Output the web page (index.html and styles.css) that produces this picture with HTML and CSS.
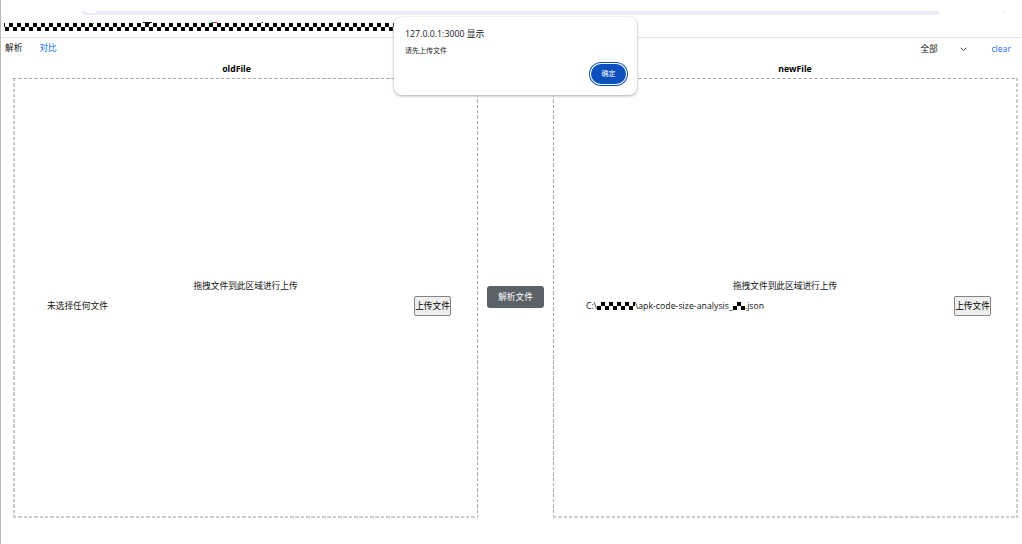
FILE: index.html
```html
<!DOCTYPE html>
<html lang="zh-CN">
<head>
<meta charset="utf-8">
<title>apk-code-size-analysis</title>
<link rel="stylesheet" href="styles.css">
</head>
<body>
<div class="page">
  <header class="browser">
    <div class="address-row"><div class="address"><div class="address-end"></div></div><div class="speck"></div></div>
    <svg class="bookmarks" viewBox="0 0 400 2"><path fill="#111" d="M138 0h9v1h-2v1h-4v-1h-3z"/><path fill="#29a329" d="M206 0h3v1h-3zM256 0h2v1h-2zM87 1h2v1h-2z"/><path fill="#e22" d="M209 0h3v1h-3z"/><path fill="#777" d="M333 0h3v1h-3z"/></svg>
    <div class="mosaic"></div>
  </header>
  <nav class="toolbar">
    <span class="tab">解析</span>
    <a class="tab link">对比</a>
    <div class="filter"><span>全部</span><svg class="chevron" viewBox="0 0 7 5"><path d="M.8 .8l2.7 2.7L6.2 .8"/></svg></div>
    <a class="link clear">clear</a>
  </nav>
  <main class="compare">
    <section class="panel">
      <h2 class="title old">oldFile</h2>
      <div class="drop left">
        <p class="hint">拖拽文件到此区域进行上传</p>
        <div class="row"><span class="file">未选择任何文件</span><button class="upload">上传文件</button></div>
      </div>
    </section>
    <button class="parse">解析文件</button>
    <section class="panel">
      <h2 class="title new">newFile</h2>
      <div class="drop right">
        <p class="hint">拖拽文件到此区域进行上传</p>
        <div class="row"><span class="file"><span>C:\</span><i class="mask wide"></i><span class="name">\apk-code-size-analysis_</span><i class="mask"></i><span>.json</span></span><button class="upload">上传文件</button></div>
      </div>
    </section>
  </main>
</div>
<div class="dialog">
  <div class="origin">127.0.0.1:3000 显示</div>
  <div class="message">请先上传文件</div>
  <button class="ok">确定</button>
</div>
</body>
</html>
```
FILE: styles.css
```css
* { box-sizing: border-box; }
body {
  margin: 0;
  background: #fff;
  color: #202124;
  font: 8.7px/12px "Open Sans", "Noto Sans CJK SC", sans-serif;
}
button { font: inherit; padding: 0; white-space: nowrap; }
.page {
  width: 1022px;
  height: 544px;
  border-left: 1px solid #bbb;
  overflow: hidden;
}
.browser {
  height: 38px;
  padding-top: 11px;
  border-bottom: 1px solid #e4e4e4;
}
.address-row { display: flex; height: 4px; }
.address {
  width: 858px;
  height: 4px;
  margin-left: 81px;
  padding-left: 4px;
  background: #ebedf8;
  border-radius: 0 0 5px 5px;
}
.address-end {
  width: 10px;
  height: 2px;
  background: #fff;
  border-radius: 0 0 5px 5px;
}
.speck {
  width: 4px;
  height: 1px;
  margin-left: 62px;
  background: #ebedf8;
}
.bookmarks {
  display: block;
  width: 400px;
  height: 2px;
  margin: 7px 0 0 4px;
}
.mosaic {
  width: 396px;
  height: 8px;
  margin: -1px 0 0 3px;
  background: repeating-conic-gradient(#fff 0 25%, #000 0 50%) -3px 0 / 8px 8px;
}
.toolbar {
  display: flex;
  height: 24px;
  padding: 4px 11px 0 4px;
  color: #111;
}
.tab { margin-right: 17px; }
.link { color: #0d6efd; }
.filter {
  display: flex;
  align-items: center;
  justify-content: space-between;
  width: 47px;
  height: 14px;
  margin-left: auto;
}
.chevron {
  width: 7px;
  height: 5px;
  fill: none;
  stroke: #333;
}
.clear { margin: 1px 0 0 24px; }
.compare {
  display: flex;
  align-items: flex-start;
  padding-left: 12px;
}
.panel { width: 465px; }
.title {
  height: 16px;
  margin: 0;
  padding-top: 1px;
  color: #000;
  font-size: 8.7px;
  line-height: 12px;
  text-align: center;
}
.old { padding-right: 18px; }
.new { padding-left: 19px; }
.drop {
  height: 440px;
  padding: 202px 27px 0 34px;
  color: #111;
  background-repeat: no-repeat;
  background-image:
    repeating-linear-gradient(90deg, #aaa 0 3.4px, transparent 3.4px 5.33px),
    repeating-linear-gradient(90deg, #ccc 0 3.4px, transparent 3.4px 5.33px),
    repeating-linear-gradient(#ccc 0 3.4px, transparent 3.4px 5.33px),
    repeating-linear-gradient(#aaa 0 3.4px, transparent 3.4px 5.33px);
}
.left {
  background-size: 100% 1px, 100% 2px, 2px 100%, 1px 100%;
  background-position: 0 0, 0 100%, 0 0, 100% 0;
}
.right {
  padding-left: 33px;
  background-size: 100% 1px, 100% 2px, 2px 100%, 1px 100%;
  background-position: 0 0, 0 100%, 100% 0, 0 0;
}
.hint { margin: 0; padding-right: 7px; text-align: center; }
.row {
  display: flex;
  align-items: center;
  justify-content: space-between;
  height: 20px;
  margin-top: 4px;
}
.file { display: flex; align-items: center; }
.mask {
  width: 12px;
  height: 8px;
  background: repeating-conic-gradient(#fff 0 25%, #000 0 50%) 4px 0 / 8px 8px;
}
.wide { width: 38px; }
.name { letter-spacing: 0.04px; }
.upload {
  width: 37px;
  height: 20px;
  border: 1px solid #858585;
  border-radius: 2px;
  background: #efefef;
  color: #000;
}
.parse {
  width: 57px;
  height: 22px;
  margin: 224px 9px 0;
  border: 0;
  border-radius: 3px;
  background: #5a6268;
  color: #fff;
}
.dialog {
  position: absolute;
  top: 17px;
  left: 394px;
  display: flex;
  flex-direction: column;
  width: 243px;
  height: 78px;
  padding: 11px 11px 0 11px;
  border-radius: 8px;
  background: #fff;
  box-shadow: 0 0 1px #ccc, 0 1px 3px #aaa;
}
.origin { font-size: 8.8px; }
.message { margin-top: 5px; font-size: 7px; line-height: 11px; }
.ok {
  align-self: flex-end;
  width: 35px;
  height: 20px;
  margin-top: 8px;
  border: 0;
  border-radius: 10px;
  background: #0b50bd;
  color: #fff;
  font-size: 7px;
  box-shadow: 0 0 0 1px #fff, 0 0 0 2px #0b50bd;
}
```
